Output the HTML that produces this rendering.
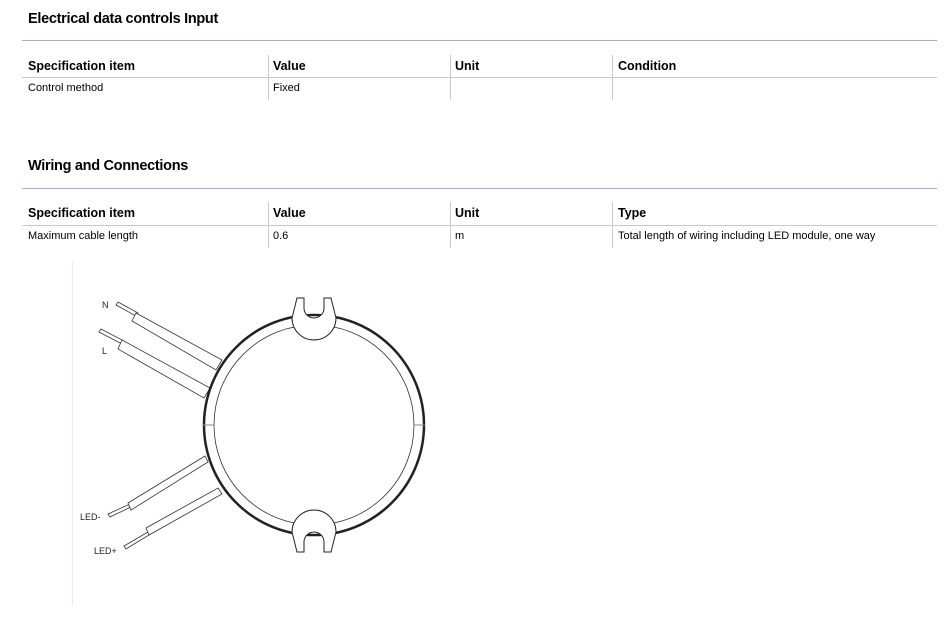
<!DOCTYPE html><html><head><style>
body{margin:0;width:947px;height:621px;background:#fff;font-family:"Liberation Sans",sans-serif;color:#000;position:relative;overflow:hidden}
.h{position:absolute;left:28px;font-size:14.5px;font-weight:bold;letter-spacing:-0.3px}
.hl{position:absolute;left:22px;width:915px;height:1px;background:#9fb3d1}
.t{position:absolute;font-size:12px}
.b{font-weight:bold;font-size:12.5px}
.r{position:absolute;left:22px;width:915px;height:1px;background:#c8c8c8}
.v{position:absolute;width:1px;background:#c8c8c8}
</style></head><body>
<div class="h" style="top:11px">Electrical data controls Input</div>
<div class="hl" style="top:40px"></div>
<div class="t b" style="left:28px;top:59px">Specification item</div>
<div class="t b" style="left:273px;top:59px">Value</div>
<div class="t b" style="left:455px;top:59px">Unit</div>
<div class="t b" style="left:618px;top:59px">Condition</div>
<div class="r" style="top:77px"></div>
<div class="t" style="left:28px;top:82px;font-size:11px">Control method</div>
<div class="t" style="left:273px;top:82px;font-size:11px">Fixed</div>
<div class="v" style="left:268px;top:55px;height:45px"></div>
<div class="v" style="left:450px;top:55px;height:45px"></div>
<div class="v" style="left:612px;top:55px;height:45px"></div>

<div class="h" style="top:158px">Wiring and Connections</div>
<div class="hl" style="top:188px"></div>
<div class="t b" style="left:28px;top:206px">Specification item</div>
<div class="t b" style="left:273px;top:206px">Value</div>
<div class="t b" style="left:455px;top:206px">Unit</div>
<div class="t b" style="left:618px;top:206px">Type</div>
<div class="r" style="top:225px"></div>
<div class="t" style="left:28px;top:230px;font-size:11px">Maximum cable length</div>
<div class="t" style="left:273px;top:230px;font-size:11px">0.6</div>
<div class="t" style="left:455px;top:230px;font-size:11px">m</div>
<div class="t" style="left:618px;top:230px;font-size:11px">Total length of wiring including LED module, one way</div>
<div class="v" style="left:268px;top:202px;height:46px"></div>
<div class="v" style="left:450px;top:202px;height:46px"></div>
<div class="v" style="left:612px;top:202px;height:46px"></div>

<div style="position:absolute;left:72px;top:262px;width:1px;height:344px;background:#e4f2e4"></div>
<svg width="947" height="621" style="position:absolute;left:0;top:0" font-family="Liberation Sans" font-size="9">
<g stroke="#333" fill="#fff" stroke-width="0.8">
<!-- N wire -->
<path d="M116 305 L136 316 L138 313 L118 302 Z"/>
<path d="M136 313 L222 360 L216 370 L132 321 Z"/>
<!-- L wire -->
<path d="M99 332 L122 344 L124 341 L101 329 Z"/>
<path d="M122 340 L210 388 L204 398 L118 349 Z"/>
<!-- LED- -->
<path d="M108 514 L130 504 L129 508 L110 517 Z"/>
<path d="M128 503 L205 456 L208 462 L131 510 Z"/>
<!-- LED+ -->
<path d="M124 546 L148 532 L149 535 L126 549 Z"/>
<path d="M146 528 L218 488 L222 494 L149 535 Z"/>
</g>
<circle cx="314" cy="425" r="110" fill="#fff" stroke="#222" stroke-width="2.5"/>
<circle cx="314" cy="425" r="100" fill="#fff" stroke="#333" stroke-width="0.8"/>
<line x1="203" y1="425" x2="214" y2="425" stroke="#888"/>
<line x1="414" y1="425" x2="425" y2="425" stroke="#888"/>
<g fill="#fff" stroke="#222" stroke-width="1">
<path d="M297 298 L304 298 L304 308 A10 10 0 0 0 324 308 L324 298 L331 298 L336 318 A22 22 0 0 1 292 318 Z"/>
<path d="M297 552 L304 552 L304 542 A10 10 0 0 1 324 542 L324 552 L331 552 L336 532 A22 22 0 0 0 292 532 Z"/>
</g>
<g fill="#222">
<text x="102" y="308">N</text>
<text x="102" y="354">L</text>
<text x="80" y="520">LED-</text>
<text x="94" y="554">LED+</text>
</g>
</svg>
</body></html>
